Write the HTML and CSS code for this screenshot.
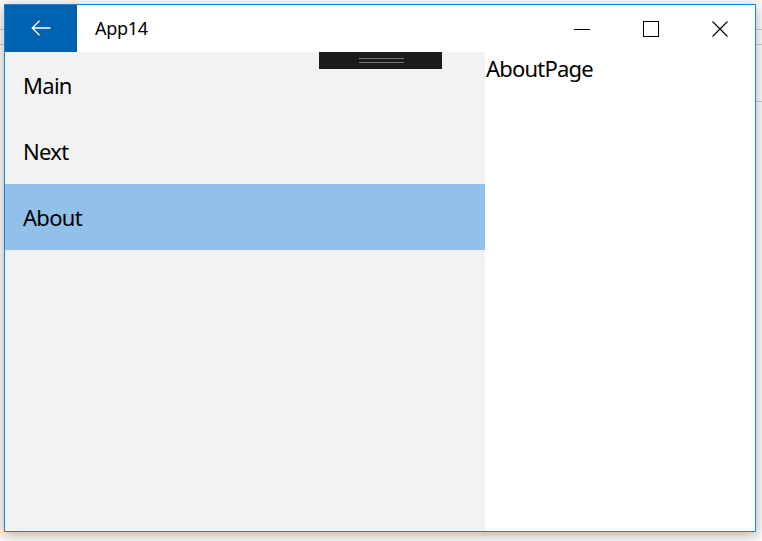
FILE: index.html
```html
<!DOCTYPE html>
<html>
<head>
<meta charset="utf-8">
<link rel="stylesheet" href="styles.css">
</head>
<body>
<div class="desktop">
  <div class="bgline l1"></div>
  <div class="bgline l2"></div>
  <div class="bgline r3"></div>
  <div class="window">
    <div class="titlebar">
      <div class="back">
        <svg width="20" height="16" viewBox="0 0 20 16"><path d="M19.5 8H1.2M8.5 0.7L1.2 8l7.3 7.3" fill="none" stroke="#fff" stroke-width="1.3"/></svg>
      </div>
      <div class="title">App14</div>
      <div class="caps">
        <div class="cap"><svg width="16" height="16" viewBox="0 0 16 16"><path d="M0 8.5h16" stroke="#000" stroke-width="1"/></svg></div>
        <div class="cap"><svg width="16" height="16" viewBox="0 0 16 16"><rect x="0.5" y="0.5" width="15" height="15" fill="none" stroke="#000" stroke-width="1"/></svg></div>
        <div class="cap"><svg width="16" height="16" viewBox="0 0 16 16"><path d="M0.5 0.5l15 15M15.5 0.5l-15 15" stroke="#000" stroke-width="1.1"/></svg></div>
      </div>
    </div>
    <div class="body">
      <nav class="nav">
        <div class="item">Main</div>
        <div class="item">Next</div>
        <div class="item selected">About</div>
        <div class="dbg"><span class="grip"></span></div>
      </nav>
      <main class="content">
        <div class="pagetext">AboutPage</div>
      </main>
    </div>
  </div>
</div>
</body>
</html>
```
FILE: styles.css
```css
html, body {
  margin: 0;
  padding: 0;
  background: #ffffff;
  width: 762px;
  height: 541px;
  overflow: hidden;
}
.desktop {
  position: relative;
  width: 762px;
  height: 541px;
  padding: 4px 0 0 4px;
  box-sizing: border-box;
  background: #fafafa;
  font-family: "Noto Sans", "Open Sans", sans-serif;
}
.bgline {
  position: absolute;
  height: 1px;
  background: #c8c8c8;
}
.l1 { left: 0; top: 29px; width: 762px; }
.l2 { left: 0; top: 44px; width: 762px; }
.r3 { left: 740px; top: 101px; width: 22px; }
.window {
  position: relative;
  width: 752px;
  height: 528px;
  border: 1px solid #1883d7;
  box-sizing: border-box;
  background: #fff;
  display: flex;
  flex-direction: column;
  box-shadow: 0 3px 12px rgba(0,0,0,0.3);
}
.titlebar {
  height: 47px;
  display: flex;
  align-items: center;
  background: #fff;
  flex: none;
}
.back {
  width: 72px;
  height: 47px;
  background: #0063b1;
  display: flex;
  align-items: center;
  justify-content: center;
}
.back svg { margin-left: -1px; margin-top: -1px; }
.title {
  margin-left: 18px;
  font-size: 18px;
  letter-spacing: -0.3px;
  color: #000;
  flex: 1;
  margin-top: -1px;
}
.caps { display: flex; height: 47px; margin-right: 1px; }
.cap {
  width: 69px;
  height: 47px;
  display: flex;
  align-items: center;
  justify-content: center;
}
.body {
  flex: 1;
  display: flex;
}
.nav {
  position: relative;
  width: 480px;
  background: #f2f2f2;
  flex: none;
}
.item {
  height: 66px;
  display: flex;
  align-items: center;
  padding-left: 18px;
  font-size: 22px;
  letter-spacing: -0.7px;
  color: #000;
}
.item.selected { background: #91c1e8; }
.dbg {
  position: absolute;
  left: 314px;
  top: 0;
  width: 123px;
  height: 17px;
  background: #1b1b1b;
  display: flex;
  justify-content: center;
  align-items: center;
}
.grip {
  display: block;
  width: 45px;
  height: 3px;
  border-top: 1px solid #777;
  border-bottom: 1px solid #777;
  margin-top: -1px;
  margin-left: 1px;
}
.content {
  flex: 1;
  background: #fff;
}
.pagetext {
  font-size: 22px;
  letter-spacing: -0.8px;
  color: #000;
  padding-left: 1px;
  margin-top: 1px;
}
```
